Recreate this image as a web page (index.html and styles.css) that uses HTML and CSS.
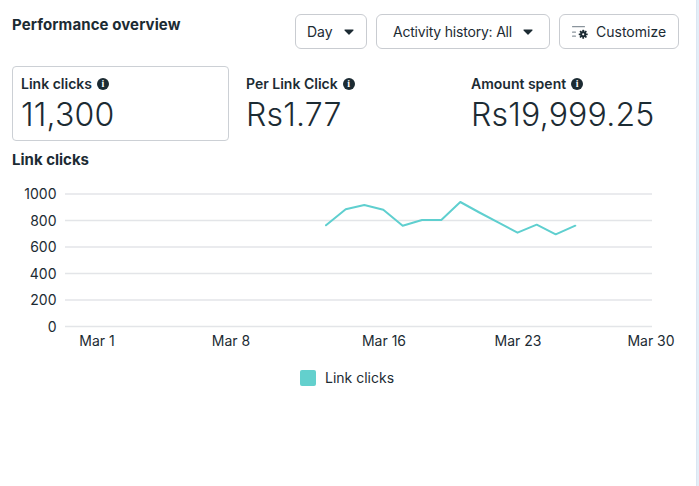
FILE: index.html
```html
<!DOCTYPE html>
<html lang="en">
<head>
<meta charset="utf-8">
<title>Performance overview</title>
<link rel="stylesheet" href="styles.css">
</head>
<body>
<div class="page">
  <main class="main">
    <header class="header">
      <h1 class="title">Performance overview</h1>
      <div class="controls">
        <button class="btn btn-day">Day <svg class="caret" viewBox="0 0 10 6"><path d="M1 0.5h8a0.6 0.6 0 0 1 0.45 1L5.45 5.4a0.6 0.6 0 0 1-0.9 0L0.55 1.5A0.6 0.6 0 0 1 1 0.5z"/></svg></button>
        <button class="btn btn-activity">Activity history: All <svg class="caret" viewBox="0 0 10 6"><path d="M1 0.5h8a0.6 0.6 0 0 1 0.45 1L5.45 5.4a0.6 0.6 0 0 1-0.9 0L0.55 1.5A0.6 0.6 0 0 1 1 0.5z"/></svg></button>
        <button class="btn btn-custom"><svg class="cust-icon" viewBox="0 0 16 13">
          <rect x="0" y="0" width="13" height="1.3" rx="0.5" fill="#8a949c"/>
          <rect x="0" y="5.4" width="4" height="1.3" rx="0.5" fill="#8a949c"/>
          <rect x="0" y="9.4" width="4" height="1.3" rx="0.5" fill="#8a949c"/>
          <g fill="#1c2b33" transform="translate(11.2 8.3)">
            <circle r="3"/>
            <rect x="-0.9" y="-4.5" width="1.8" height="9" rx="0.4"/>
            <rect x="-4.5" y="-0.9" width="9" height="1.8" rx="0.4"/>
            <rect x="-0.9" y="-4.5" width="1.8" height="9" rx="0.4" transform="rotate(45)"/>
            <rect x="-0.9" y="-4.5" width="1.8" height="9" rx="0.4" transform="rotate(-45)"/>
            <circle r="1.1" fill="#fff"/>
          </g>
        </svg>Customize</button>
      </div>
    </header>

    <section class="metrics">
      <div class="metric selected">
        <div class="metric-label">Link clicks <span class="info">i</span></div>
        <div class="metric-value">11,300</div>
      </div>
      <div class="metric">
        <div class="metric-label">Per Link Click <span class="info">i</span></div>
        <div class="metric-value">Rs1.77</div>
      </div>
      <div class="metric">
        <div class="metric-label">Amount spent <span class="info">i</span></div>
        <div class="metric-value">Rs19,999.25</div>
      </div>
    </section>

    <h2 class="chart-title">Link clicks</h2>

    <div class="chart">
      <svg class="chart-svg" width="696" height="180" viewBox="0 180 696 180">
        <g class="grid" stroke="#e3e5e8" stroke-width="1.3">
          <line x1="65" y1="194" x2="652" y2="194"/>
          <line x1="65" y1="220.5" x2="652" y2="220.5"/>
          <line x1="65" y1="247" x2="652" y2="247"/>
          <line x1="65" y1="273.5" x2="652" y2="273.5"/>
          <line x1="65" y1="300" x2="652" y2="300"/>
          <line x1="65" y1="326.5" x2="652" y2="326.5"/>
        </g>
        <g class="ylabels" text-anchor="end">
          <text x="56.5" y="199">1000</text>
          <text x="56.5" y="225.5">800</text>
          <text x="56.5" y="252">600</text>
          <text x="56.5" y="278.5">400</text>
          <text x="56.5" y="305">200</text>
          <text x="56.5" y="331.5">0</text>
        </g>
        <g class="xlabels" text-anchor="middle">
          <text x="97" y="346">Mar 1</text>
          <text x="231" y="346">Mar 8</text>
          <text x="384" y="346">Mar 16</text>
          <text x="518" y="346">Mar 23</text>
          <text x="651" y="346">Mar 30</text>
        </g>
        <polyline fill="none" stroke="#5fcfcf" stroke-width="2" stroke-linejoin="round" stroke-linecap="round"
          points="326,225.3 345.7,209.3 364.3,205 383.3,209.7 402.7,225.7 422,220 441.3,220 460.3,202 479.4,212.5 498.6,222.7 517.5,232.7 536.7,224.7 555.7,234.3 575.3,225.7"/>
      </svg>
    </div>

    <div class="legend">
      <span class="swatch"></span><span class="legend-text">Link clicks</span>
    </div>
  </main>
  <aside class="edge"></aside>
</div>
</body>
</html>
```

FILE: styles.css
```css
* { box-sizing: border-box; }
html, body { margin: 0; padding: 0; }
body {
  background: #ffffff;
  font-family: "Inter", "Roboto", "Liberation Sans", sans-serif;
  color: #1c2b33;
}
.page {
  display: flex;
  width: 699px;
  height: 486px;
  overflow: hidden;
}
.main {
  width: 696px;
  flex: none;
  background: #fff;
}
.edge {
  flex: 1;
  background: #e4eef8;
  border-left: 1px solid #dbe6f1;
}
.header {
  display: flex;
  justify-content: space-between;
  align-items: flex-start;
  padding: 14px 17px 0 12px;
}
.title {
  margin: 2px 0 0;
  font-size: 15px;
  font-weight: 700;
  line-height: 18px;
  letter-spacing: 0.1px;
}
.controls {
  display: flex;
  gap: 9px;
}
.btn {
  display: flex;
  align-items: center;
  height: 35px;
  border: 1px solid #c9ccd1;
  border-radius: 6px;
  background: #fff;
  font-family: inherit;
  font-size: 14px;
  color: #1c2b33;
  padding: 0 13px 0 11px;
  gap: 11px;
  white-space: nowrap;
}
.btn-day { width: 72px; }
.btn-activity { width: 174px; justify-content: center; padding: 0 10px; letter-spacing: -0.2px; }
.btn-custom { width: 120px; gap: 8px; padding: 0 10px 0 12px; }
.caret { width: 10px; height: 6px; fill: #1c2b33; flex: none; }
.cust-icon { width: 16px; height: 13px; margin-top: 2px; flex: none; }

.metrics {
  display: grid;
  grid-template-columns: 217px 217px 217px;
  column-gap: 8px;
  padding: 17px 0 0 12px;
}
.metric {
  border: 1px solid transparent;
  border-radius: 4px;
  padding: 8px 8px 8px 8px;
  height: 75px;
}
.metric.selected { border-color: #ccd0d5; }
.metric-label {
  display: flex;
  align-items: center;
  gap: 5px;
  font-size: 14px;
  font-weight: 600;
  line-height: 18px;
}
.info {
  display: inline-flex;
  align-items: center;
  justify-content: center;
  width: 12px;
  height: 12px;
  border-radius: 50%;
  background: #1c2b33;
  color: #fff;
  font-size: 10px;
  font-weight: 800;
  line-height: 1;
  font-family: "Liberation Serif", serif;
}
.metric-value {
  margin-top: 3px;
  font-size: 32px;
  font-weight: 300;
  line-height: 37px;
  letter-spacing: 0.2px;
}
.chart-title {
  margin: 10px 0 0 12px;
  font-size: 15px;
  font-weight: 700;
  line-height: 18px;
}
.chart {
  margin-top: 11px;
  height: 180px;
}
.chart-svg { display: block; }
.chart-svg text {
  font-family: "Inter", "Roboto", "Liberation Sans", sans-serif;
  font-size: 14px;
  fill: #1c2b33;
}
.legend {
  display: flex;
  justify-content: center;
  align-items: center;
  gap: 9px;
  margin-top: 9px;
  padding-right: 2px;
}
.swatch {
  width: 16px;
  height: 16px;
  border-radius: 2px;
  background: #63d0cd;
}
.legend-text {
  font-size: 14px;
  line-height: 18px;
}
```
